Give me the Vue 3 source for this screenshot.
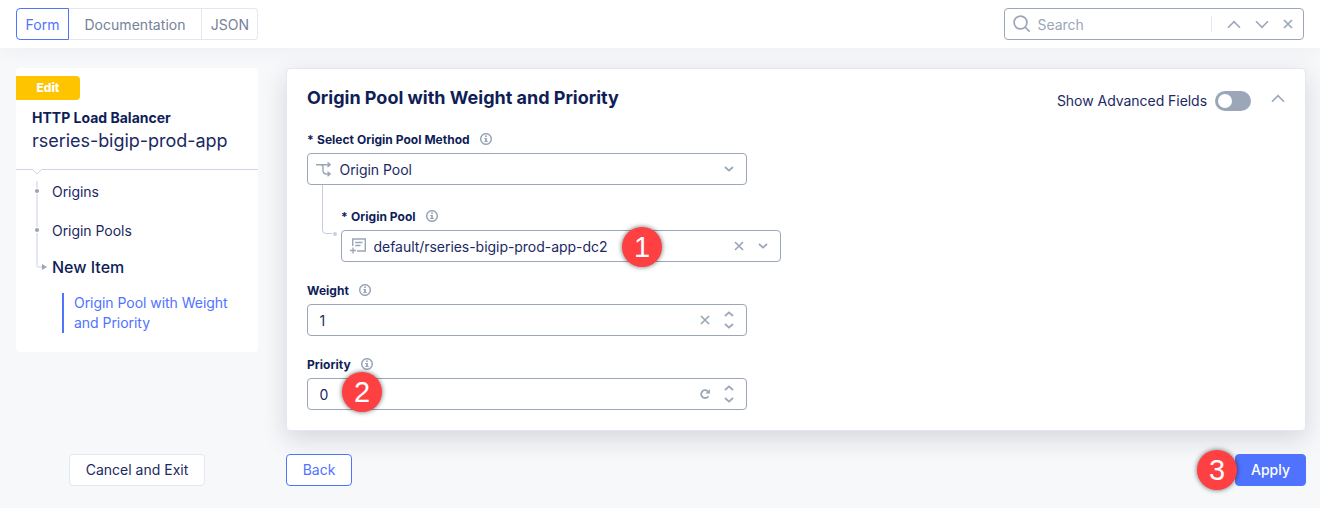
<script setup>
import { h } from 'vue'

const crumbs = ['Origins', 'Origin Pools']

const InfoIcon = () =>
  h('svg', { width: 12, height: 12, viewBox: '0 0 12 12', fill: 'none' }, [
    h('circle', { cx: 6, cy: 6, r: 5.3, stroke: '#9ba6b9', 'stroke-width': 1.5 }),
    h('path', { d: 'M5.1 2.5h1.8v1.6H5.1zM4.2 4.9h2.7v3h.9v1.2H4.2V7.9h.9V6.1h-.9z', fill: '#9ba6b9' }),
  ])

const Chevron = (props) =>
  h('svg', { width: 10, height: 6, viewBox: '0 0 10 6', fill: 'none' }, [
    h('path', {
      d: props.up ? 'M1 5 5 1.4 9 5' : 'M1 1 5 4.6 9 1',
      stroke: '#9ba6b9',
      'stroke-width': 1.8,
    }),
  ])
Chevron.props = ['up']

const WideChevron = (props) =>
  h('svg', { width: 14, height: 9, viewBox: '0 0 14 9', fill: 'none' }, [
    h('path', {
      d: props.up ? 'M1 7.7 7 1.7 13 7.7' : 'M1 1.3 7 7.3 13 1.3',
      stroke: '#9ba6b9',
      'stroke-width': 1.6,
    }),
  ])
WideChevron.props = ['up']

const Cross = () =>
  h('svg', { width: 10, height: 10, viewBox: '0 0 10 10', fill: 'none' }, [
    h('path', { d: 'M1 1l8 8M9 1 1 9', stroke: '#9ba6b9', 'stroke-width': 1.7 }),
  ])
</script>

<template>
  <div class="page">
    <header class="topbar">
      <nav class="tabs">
        <span class="tab active">Form</span>
        <span class="tab docs">Documentation</span>
        <span class="tab json">JSON</span>
      </nav>
      <div class="search">
        <svg width="18" height="18" viewBox="0 0 18 18" fill="none" stroke="#9ba6b9" stroke-width="1.7">
          <circle cx="7.5" cy="7.5" r="6.4" />
          <path d="M12 12l4.7 4.7" />
        </svg>
        <span class="placeholder">Search</span>
        <span class="search-tools">
          <WideChevron :up="true" />
          <WideChevron />
          <Cross />
        </span>
      </div>
    </header>

    <div class="body">
      <aside>
        <div class="side-card">
          <span class="edit">Edit</span>
          <div class="kind">HTTP Load Balancer</div>
          <div class="name">rseries-bigip-prod-app</div>
          <svg class="divider" width="242" height="7" viewBox="0 0 242 7" fill="none">
            <path d="M0 1.5H16.5L21 6L25.5 1.5H242" stroke="#d0d4e4" />
          </svg>
          <div class="steps">
            <svg width="14" height="98" viewBox="0 0 14 98" fill="none">
              <path d="M3 0V83.5Q3 86 5.5 86H10" stroke="#e4e6f4" stroke-width="2" />
              <circle cx="3" cy="10" r="3" fill="#fff" />
              <circle cx="3" cy="10" r="2.1" fill="#9ba6b9" />
              <circle cx="3" cy="49" r="3" fill="#fff" />
              <circle cx="3" cy="49" r="2.1" fill="#9ba6b9" />
              <path d="M8 83l5 3-5 3z" fill="#9ba6b9" />
            </svg>
            <div class="step-list">
              <div v-for="c in crumbs" :key="c" class="step">{{ c }}</div>
              <div class="step current">New Item</div>
            </div>
          </div>
          <div class="substep">Origin Pool with Weight<br />and Priority</div>
        </div>
        <button class="btn cancel">Cancel and Exit</button>
      </aside>

      <main>
        <section class="card">
          <div class="card-head">
            <h1>Origin Pool with Weight and Priority</h1>
            <div class="advanced">
              <span>Show Advanced Fields</span>
              <i class="toggle"></i>
              <WideChevron class="collapse" :up="true" />
            </div>
          </div>

          <div class="label first"><span class="star">*</span><span>Select Origin Pool Method</span><InfoIcon /></div>
          <div class="field">
            <svg class="lead" width="16" height="15" viewBox="0 0 16 15" fill="none" stroke="#9ba6b9" stroke-width="1.4">
              <path d="M0 2.7H14M11.5 .4 14.2 2.7 11.5 5M4.500 2.700Q7 2.700 7 5V8.500Q7 12 10.500 12H14M11.5 9.7 14.2 12 11.5 14.3" />
            </svg>
            <span class="value v1">Origin Pool</span>
            <span class="end"><Chevron /></span>
          </div>

          <div class="nested">
            <svg class="branch" width="17" height="53" viewBox="0 0 17 53" fill="none">
              <path d="M1.5 0V45Q1.5 48.5 5 48.5H11" stroke="#c5cbe0" />
              <circle cx="14" cy="49" r="2" fill="#c9cfe0" />
            </svg>
            <div class="nested-body">
              <div class="label"><span class="star">*</span><span>Origin Pool</span><InfoIcon /></div>
              <div class="field">
                <svg class="lead" width="17" height="16" viewBox="0 0 17 16" fill="none" stroke="#9ba6b9" stroke-width="1.4">
                  <path d="M2.7 8V1H15.3V13H7M5.2 4.5H12.5M5.2 7.5H10.5M0 12.5H6M3 9.5V15.5" />
                </svg>
                <span class="value v2">default/rseries-bigip-prod-app-dc2</span>
                <span class="end"><Cross /><Chevron /></span>
                <span class="marker m1">1</span>
              </div>
            </div>
          </div>

          <div class="label"><span>Weight</span><InfoIcon /></div>
          <div class="field">
            <span class="value num">1</span>
            <span class="end"><Cross /><span class="spinner"><Chevron :up="true" /><Chevron /></span></span>
          </div>

          <div class="label"><span>Priority</span><InfoIcon /></div>
          <div class="field">
            <span class="value num">0</span>
            <span class="end">
              <svg width="10" height="10" viewBox="0 0 10 10" fill="none">
                <path d="M7.8 2.3A3.9 3.9 0 1 0 8.4 7.2" stroke="#9ba6b9" stroke-width="1.8" />
                <path d="M10 0V4.6H5.4z" fill="#9ba6b9" />
              </svg>
              <span class="spinner"><Chevron :up="true" /><Chevron /></span>
            </span>
            <span class="marker m2">2</span>
          </div>
        </section>
        <div class="actions">
          <button class="btn back">Back</button>
          <span class="apply-wrap">
            <button class="btn apply">Apply</button>
            <span class="marker m3">3</span>
          </span>
        </div>
      </main>
    </div>
  </div>
</template>

<style>
body { margin: 0; background: #f7f8fa; }
</style>

<style scoped>
* { box-sizing: border-box; }
.page {
  width: 1320px; height: 508px; overflow: hidden; background: #f7f8fa;
  font-family: Inter, sans-serif; font-size: 14px; letter-spacing: -.04px; color: #1b2963;
}
svg { display: block; flex: none; }
.topbar {
  position: relative; height: 48px; padding: 8px 16px; background: #fff;
  display: flex; justify-content: space-between;
  box-shadow: 0 0 24px rgba(20, 25, 50, .05);
}
.tabs { display: flex; height: 32px; }
.tab {
  border: 1px solid #e4e6f4; border-left: 0; line-height: 31px; text-align: center;
  color: #76819a; letter-spacing: .02px;
}
.tab.active { width: 53px; border: 1px solid #4f73ff; border-radius: 4px 0 0 4px; color: #4f73ff; }
.tab.docs { width: 133px; letter-spacing: .04px; }
.tab.json { width: 56px; border-radius: 0 4px 4px 0; padding-left: 1px; }
.search {
  width: 300px; height: 32px; border: 1px solid #9ba6b9; border-radius: 4px;
  display: flex; align-items: center; padding-left: 8px;
}
.placeholder { margin-left: 6.5px; color: #9ba6b9; line-height: 32px; flex: 1; padding-top: 2px; }
.search-tools {
  height: 16px; border-left: 1px solid #e4e6f4; width: 92px; display: flex;
  align-items: center; padding-left: 15px; gap: 14px;
}
.body { display: flex; padding: 20px 14px 0 16px; }
aside { width: 242px; margin-right: 28px; display: flex; flex-direction: column; }
.side-card { height: 284px; background: #fff; border-radius: 4px; padding-top: 8px; }
.edit {
  display: block; width: 64px; height: 24px; line-height: 24px; border-radius: 0 4px 4px 0;
  background: #ffc400; color: #fff; font-size: 12px; font-weight: 800; text-align: center;
}
.kind {
  margin: 8px 0 0 16px; height: 20px; line-height: 20px; font-weight: 700;
  letter-spacing: 0; color: #0f1e57;
}
.name { margin-left: 16px; height: 26px; line-height: 26px; font-size: 18px; }
.divider { margin-top: 14px; }
.steps { display: flex; margin: 6px 0 0 18px; height: 98px; }
.step-list { margin-left: 4px; }
.step { height: 39px; line-height: 21px; }
.step.current { line-height: 16px; font-size: 16px; font-weight: 500; color: #0f1e57; letter-spacing: 0; }
.substep {
  margin: 14px 0 0 46px; border-left: 2px solid #4f73ff; padding-left: 10px;
  line-height: 20px; height: 40px; color: #4f73ff;
}
.btn {
  height: 32px; border-radius: 4px; border: 1px solid #e4e6f4; background: #fff;
  font: 14px/30px Inter, sans-serif; color: #1b2963; padding: 0; display: block;
}
.cancel { width: 136px; margin: 102px 0 0 53px; }
main { width: 1020px; }
.card {
  height: 363px; background: #fff; border: 1px solid #e4e6f4; border-radius: 4px;
  padding: 19px 20px 0; box-shadow: 0 8px 24px rgba(20, 25, 50, .15);
}
.card-head { display: flex; justify-content: space-between; height: 20px; }
h1 {
  margin: 0; font-size: 18px; line-height: 20px; font-weight: 700; letter-spacing: -.01px;
  color: #0f1e57; white-space: nowrap;
}
.advanced { display: flex; align-items: center; height: 26px; }
.advanced span { padding-bottom: 1px; }
.toggle {
  width: 36px; height: 20px; border-radius: 10px; background: #9ba6b9; margin: 0 20px 0 8px;
  display: flex; align-items: center; padding-left: 3px;
}
.toggle::before { content: ''; width: 14px; height: 14px; border-radius: 50%; background: #fff; }
.collapse { margin-bottom: 5px; }
.label {
  margin-top: 21px; height: 21px; display: flex; align-items: flex-start;
  font-size: 12px; line-height: 16px; font-weight: 700; letter-spacing: .03px;
  color: #0f1e57; white-space: nowrap;
}
.label.first { margin-top: 24px; }
.label svg { margin: 1px 0 0 10px; }
.star { width: 10px; }
.field {
  position: relative; width: 440px; height: 32px; border: 1px solid #9ba6b9;
  border-radius: 4px; display: flex; align-items: center;
}
.lead { margin-left: 8px; }
.value { line-height: 30px; padding-top: 2px; white-space: nowrap; }
.v1 { margin-left: 7.5px; }
.v2 { margin-left: 6.5px; }
.num { margin-left: 11.5px; }
.end { margin-left: auto; margin-right: 12px; display: flex; align-items: center; gap: 14px; }
.spinner { display: flex; flex-direction: column; gap: 6px; }
.nested { display: flex; height: 77px; margin-left: 14px; }
.nested-body { margin-left: 3px; padding-top: 24px; }
.nested .label { margin-top: 0; height: 21px; }
.marker {
  position: absolute; width: 40px; height: 40px; border-radius: 50%; background: #ff4043;
  color: #fff; font: 29px/40px "Liberation Sans", Arial, sans-serif; text-align: center;
  box-shadow: 0 0 5px rgba(0, 0, 0, .6);
}
.m1 { left: 280px; top: -4px; }
.m2 { left: 34px; top: -7px; }
.m3 { left: -38px; top: -4px; }
.actions { display: flex; justify-content: space-between; margin-top: 23px; }
.back { width: 66px; border-color: #4f73ff; color: #4f73ff; }
.apply-wrap { position: relative; }
.apply { width: 71px; background: #4f73ff; border-color: #4f73ff; color: #fff; font-weight: 500; }
</style>
